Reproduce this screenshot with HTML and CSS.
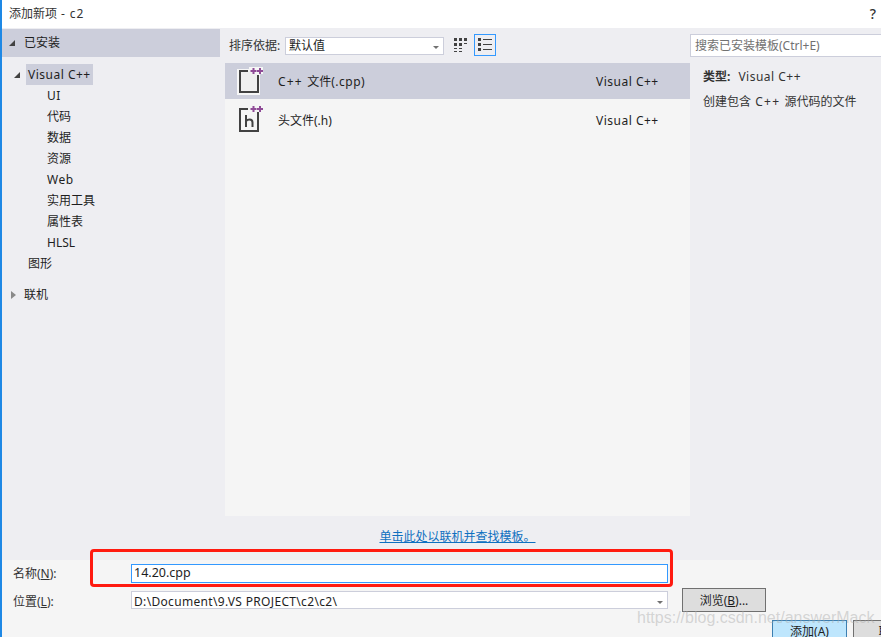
FILE: index.html
```html
<!DOCTYPE html>
<html lang="zh">
<head>
<meta charset="utf-8">
<title>添加新项 - c2</title>
<link rel="stylesheet" href="styles.css">
</head>
<body>
<div class="window">
  <header class="titlebar"><span>添加新项<span class="lat-wide"> - c2</span></span><span class="help">?</span></header>
  <main class="main">
    <nav class="sidebar">
      <div class="installed"><span class="tri open"></span>已安装</div>
      <div class="tree">
        <div class="row-vc"><span class="tri open small"></span><span class="selected lat">Visual C++</span></div>
        <div class="leaf lat">UI</div>
        <div class="leaf">代码</div>
        <div class="leaf">数据</div>
        <div class="leaf">资源</div>
        <div class="leaf lat">Web</div>
        <div class="leaf">实用工具</div>
        <div class="leaf">属性表</div>
        <div class="leaf">HLSL</div>
        <div class="leaf top">图形</div>
        <div class="online"><span class="tri closed"></span>联机</div>
      </div>
    </nav>
    <section class="center">
      <div class="toolbar">
        <label class="sort-label">排序依据:</label>
        <div class="sort-combo"><span>默认值</span><span class="caret"></span></div>
        <button class="view-btn" aria-label="小图标">
          <svg width="16" height="16" viewBox="0 0 16 16"><g fill="#424242"><rect x="0" y="1" width="3" height="3"/><rect x="5" y="1" width="3" height="3"/><rect x="10" y="1" width="3" height="3"/><rect x="0" y="6" width="3" height="3"/><rect x="5" y="6" width="3" height="3"/><rect x="10" y="6" width="3" height="1"/><rect x="0" y="11" width="3" height="1"/><rect x="5" y="11" width="3" height="1"/><rect x="0" y="14" width="3" height="1"/><rect x="5" y="14" width="3" height="1"/></g></svg>
        </button>
        <button class="view-btn active" aria-label="列表">
          <svg width="16" height="16" viewBox="0 0 16 16"><g fill="#424242"><rect x="1" y="1" width="3" height="3"/><rect x="6" y="2" width="9" height="1"/><rect x="1" y="6" width="3" height="3"/><rect x="6" y="7" width="9" height="1"/><rect x="1" y="11" width="3" height="3"/><rect x="6" y="12" width="9" height="1"/></g></svg>
        </button>
      </div>
      <div class="list">
        <div class="item selected-item">
          <svg class="file-icon" width="28" height="30" viewBox="0 0 28 30">
            <path d="M2 3h12v-2h14v7h-3v21h-23z" fill="#f6f6f6"/>
            <path d="M13 5H5V26H23V9" fill="#f0f0f0" stroke="#424242" stroke-width="2"/>
            <path d="M18.500 2v6M15.500 5h6M25 2v6M22 5h6" stroke="#8f4b97" stroke-width="2" fill="none"/>
          </svg>
          <span class="item-name"><span class="plus">C++ </span>文件<span class="lat">(.cpp)</span></span><span class="item-type lat">Visual C++</span>
        </div>
        <div class="item second">
          <svg class="file-icon" width="28" height="30" viewBox="0 0 28 30">
            <path d="M13 4H5V26H23V7" fill="none" stroke="#424242" stroke-width="2"/>
            <path d="M11 10v12M11 16q1.500-1.500 3.500-1.500q3 0 3 3v4.500" fill="none" stroke="#424242" stroke-width="2"/>
            <path d="M18.500 1v6M15.500 4h6M25 1v6M22 4h6" stroke="#8f4b97" stroke-width="2" fill="none"/>
          </svg>
          <span class="item-name">头文件(.h)</span><span class="item-type lat">Visual C++</span>
        </div>
      </div>
      <div class="link-row"><a class="link">单击此处以联机并查找模板。</a></div>
    </section>
    <aside class="details">
      <div class="search">搜索已安装模板(Ctrl+E)</div>
      <div class="info"><b>类型:</b><span class="lat type-value">Visual C++</span></div>
      <div class="info desc">创建包含<span class="plus"> C++ </span>源代码的文件</div>
    </aside>
  </main>
  <footer class="footer">
    <div class="form-row">
      <label class="form-label">名称(<u>N</u>):</label>
      <div class="field name-field">14.20.cpp</div>
    </div>
    <div class="form-row second-row">
      <label class="form-label">位置(<u>L</u>):</label>
      <div class="field path-field"><span class="path-text">D:\Document\9.VS PROJECT\c2\c2\</span><span class="caret"></span></div>
      <button class="btn browse">浏览(<u>B</u>)...</button>
    </div>
    <div class="actions">
      <button class="btn add">添加(A)</button>
      <button class="btn cancel">取消</button>
    </div>
  </footer>
  <div class="annotation"></div>
  <div class="watermark">https://blog.csdn.net/answerMack</div>
</div>
</body>
</html>
```
FILE: styles.css
```css
* { box-sizing: border-box; }
html, body { margin: 0; height: 100%; overflow: hidden; }
body {
  font-family: "Noto Sans", "Noto Sans CJK SC", sans-serif;
  font-size: 12px;
  line-height: 16px;
  color: #1e1e1e;
  background: #fff;
}
.lat { letter-spacing: 0.5px; }
.plus { letter-spacing: 1.2px; }
.lat-wide { letter-spacing: 0.9px; }
.window {
  position: relative;
  width: 881px;
  height: 637px;
  border-left: 2px solid #1e88e5;
  display: flex;
  flex-direction: column;
  overflow: hidden;
}
.titlebar {
  height: 28px;
  flex: none;
  display: flex;
  justify-content: space-between;
  align-items: center;
  padding: 0 5px 0 7px;
  color: #333;
  background: #fff;
}
.help { font-size: 14px; font-weight: 500; }
.main {
  height: 532px;
  flex: none;
  display: flex;
  background: #eeeef2;
}
.sidebar { width: 223px; flex: none; }
.installed {
  width: 218px;
  height: 28px;
  margin-top: 1px;
  background: #cccedb;
  display: flex;
  align-items: center;
  gap: 9px;
  padding-left: 7px;
}
.tree { padding-top: 7px; }
.row-vc { height: 21px; display: flex; align-items: center; padding-left: 12px; }
.selected {
  height: 21px;
  line-height: 21px;
  background: #cccedb;
  padding: 0 2px;
  margin-left: 6px;
}
.leaf { height: 21px; line-height: 21px; padding-left: 45px; }
.leaf.top { padding-left: 26px; }
.online {
  margin-top: 10px;
  height: 21px;
  display: flex;
  align-items: center;
  gap: 8px;
  padding-left: 9px;
}
.tri { display: inline-block; flex: none; }
.tri.open {
  width: 0;
  height: 0;
  border-left: 6px solid transparent;
  border-bottom: 6px solid #424242;
}
.tri.closed {
  width: 0;
  height: 0;
  border-top: 4px solid transparent;
  border-bottom: 4px solid transparent;
  border-left: 5px solid #8a8a8a;
}
.center { width: 465px; flex: none; display: flex; flex-direction: column; }
.toolbar {
  height: 35px;
  flex: none;
  display: flex;
  align-items: center;
  padding: 1px 0 0 4px;
}
.sort-label { width: 56px; flex: none; color: #333; }
.sort-combo {
  width: 159px;
  height: 18px;
  border: 1px solid #cccedb;
  background: #fff;
  display: flex;
  align-items: center;
  justify-content: space-between;
  padding: 0 4px 0 3px;
}
.caret {
  width: 0;
  height: 0;
  border-left: 3px solid transparent;
  border-right: 3px solid transparent;
  border-top: 3px solid #717171;
  margin-top: 2px;
}
.view-btn {
  width: 22px;
  height: 22px;
  padding: 0;
  margin: -2px 0 0 7px;
  border: 1px solid transparent;
  background: transparent;
  display: flex;
  align-items: center;
  justify-content: center;
}
.view-btn + .view-btn { margin-left: 1px; }
.view-btn.active { border-color: #3399ff; }
.list { height: 453px; flex: none; background: #f5f5f5; }
.item {
  height: 36px;
  display: flex;
  align-items: center;
  padding-left: 10px;
}
.selected-item { background: #cccedb; }
.second { margin-top: 3px; }
.file-icon { flex: none; margin-right: 15px; }
.item-name { width: 318px; padding-top: 2px; }
.item-type { white-space: nowrap; padding-top: 2px; }
.link-row {
  flex: 1;
  display: flex;
  justify-content: center;
  align-items: flex-start;
  padding-top: 13px;
}
.link { color: #0e70c0; text-decoration: underline; }
.details { flex: 1; min-width: 0; }
.search {
  width: 200px;
  height: 23px;
  margin-top: 6px;
  border: 1px solid #cccedb;
  background: #fff;
  color: #717171;
  padding: 2px 4px;
  line-height: 17px;
  white-space: nowrap;
}
.info { padding-left: 13px; color: #333; margin-top: 12px; white-space: nowrap; }
.info b { font-weight: 700; }
.type-value { margin-left: 8px; }
.desc { margin-top: 9px; }
.footer {
  flex: 1;
  background: #f5f5f5;
  padding: 4px 0 0 11px;
}
.form-row { display: flex; align-items: center; height: 18px; }
.second-row { margin-top: 9px; }
.form-label { width: 118px; flex: none; color: #333; padding-top: 2px; }
.second-row .form-label { padding-top: 4px; }
.field {
  width: 537px;
  height: 18px;
  background: #fff;
  padding: 0 2px;
  line-height: 16px;
  white-space: nowrap;
}
.name-field { border: 1px solid #3399ff; font-size: 12.5px; height: 19px; }
.path-field {
  border: 1px solid #cccedb;
  display: flex;
  align-items: center;
  justify-content: space-between;
  padding: 4px 4px 0 2px;
}
.path-text { letter-spacing: 0.33px; }
.path-field .caret { margin-top: 0; }
.btn {
  font: inherit;
  color: #1e1e1e;
  padding: 0;
  border: 1px solid #707070;
  background: #dddddd;
  flex: none;
}
.browse { width: 84px; height: 24px; margin-left: 14px; padding-top: 1px; }
.actions { display: flex; gap: 6px; margin: 11px 0 0 759px; }
.add {
  width: 75px;
  height: 24px;
  background: #bee6fd;
  border-color: #3c7fb1;
}
.cancel { width: 75px; height: 24px; }
.annotation {
  position: absolute;
  left: 88px;
  top: 549px;
  width: 583px;
  height: 38px;
  border: 3px solid #ff1a10;
  border-radius: 4px;
}
.watermark {
  position: absolute;
  left: 635px;
  top: 608px;
  font-family: "Liberation Sans", sans-serif;
  font-size: 16px;
  line-height: 20px;
  white-space: nowrap;
  color: rgba(170, 170, 170, 0.45);
}
```
